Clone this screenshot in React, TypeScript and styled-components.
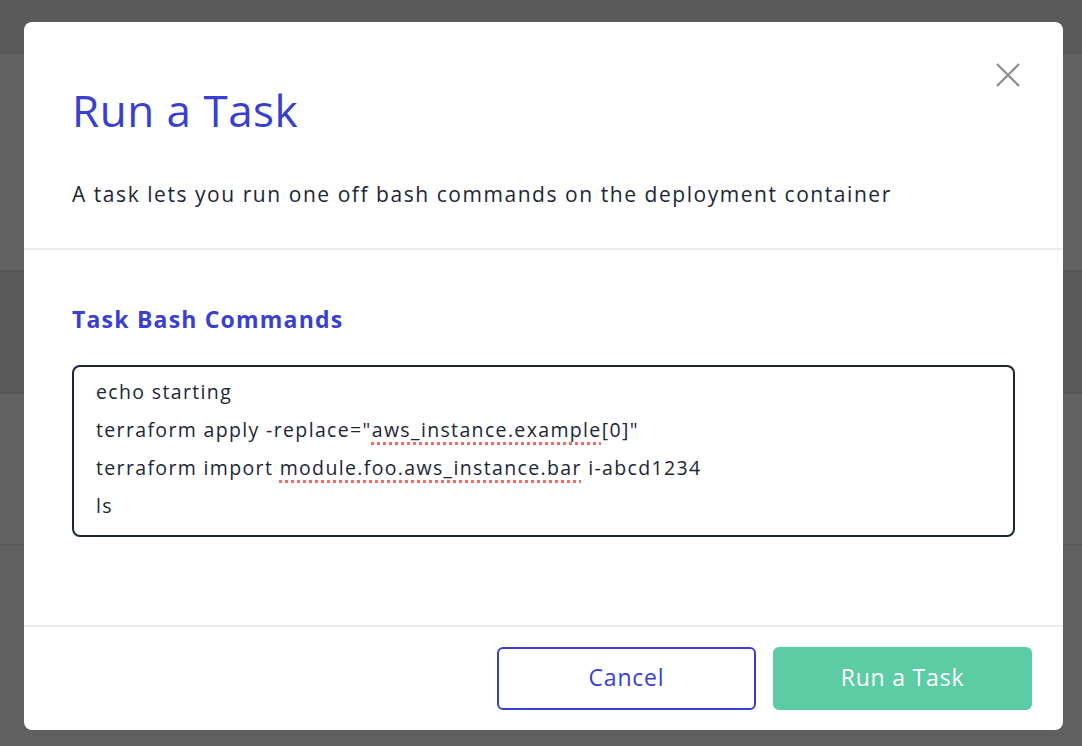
import styled, { createGlobalStyle } from 'styled-components';

const Global = createGlobalStyle`
  html, body { margin: 0; height: 100%; }
  body { font-family: 'Open Sans', 'Liberation Sans', sans-serif; background: #5e5e5e; overflow: hidden; }
`;

const Page = styled.div`
  position: relative;
  width: 1082px;
  height: 746px;
  background: #606060;
`;

const PageBand = styled.div<{ $h: number; $bg: string }>`
  height: ${({ $h }) => $h}px;
  background: ${({ $bg }) => $bg};
  border-bottom: 2px solid #585858;
`;

const Overlay = styled.div`
  position: absolute;
  inset: 0;
  padding: 22px 19px 16px 24px;
`;

const Modal = styled.div`
  height: 708px;
  background: #fff;
  border-radius: 8px;
  display: flex;
  flex-direction: column;
  position: relative;
`;

const Close = styled.button`
  position: absolute;
  top: 40px;
  right: 42px;
  border: 0;
  background: none;
  padding: 0;
  cursor: pointer;
`;

const Header = styled.div`
  padding: 60px 48px 40px;
  border-bottom: 2px solid #ececec;
`;

const Title = styled.h1`
  margin: 0 0 42px;
  font-size: 44px;
  font-weight: 400;
  letter-spacing: 0.5px;
  color: #3a3fd3;
  line-height: 56px;
`;

const Description = styled.p`
  margin: 0;
  font-size: 21px;
  letter-spacing: 1.55px;
  color: #1c2636;
`;

const Body = styled.div`
  flex: 1;
  padding: 53px 48px 0;
  border-bottom: 2px solid #ececec;
`;

const Label = styled.h2`
  margin: 0 0 30px;
  font-size: 23px;
  font-weight: 700;
  letter-spacing: 1.2px;
  color: #3a3fd3;
`;

const Commands = styled.div`
  border: 2px solid #1c2636;
  border-radius: 8px;
  padding: 6px 22px;
  height: 156px;
  font-size: 19.5px;
  letter-spacing: 1.35px;
  line-height: 38px;
  color: #1c2636;
`;

const Typo = styled.span`
  text-decoration: underline dotted #f26a6a 3px;
  text-underline-offset: 5px;
`;

const Footer = styled.div`
  display: flex;
  justify-content: flex-end;
  gap: 17px;
  padding: 20px 31px 20px;
`;

const Button = styled.button<{ $primary?: boolean }>`
  width: 259px;
  height: 63px;
  border-radius: 6px;
  font-family: inherit;
  font-size: 23px;
  letter-spacing: 0.8px;
  line-height: 1;
  padding-bottom: 4px;
  cursor: pointer;
  border: 2px solid ${({ $primary }) => ($primary ? '#5ccca4' : '#3a3fd3')};
  background: ${({ $primary }) => ($primary ? '#5ccca4' : '#fff')};
  color: ${({ $primary }) => ($primary ? '#fff' : '#3a3fd3')};
`;

export default function App() {
  return (
    <Page>
      <Global />
      <PageBand $h={52} $bg="#5a5a5a" />
      <PageBand $h={216} $bg="#626262" />
      <PageBand $h={120} $bg="#5a5a5a" />
      <PageBand $h={150} $bg="#626262" />
      <Overlay>
        <Modal>
          <Close aria-label="Close">
            <svg width="26" height="26" viewBox="0 0 26 26" stroke="#8a8a8a" strokeWidth="2.2">
              <path d="M2 2l22 22M24 2L2 24" />
            </svg>
          </Close>
          <Header>
            <Title>Run a Task</Title>
            <Description>A task lets you run one off bash commands on the deployment container</Description>
          </Header>
          <Body>
            <Label>Task Bash Commands</Label>
            <Commands>
              <div>echo starting</div>
              <div>
                terraform apply -replace="<Typo>aws_instance.example</Typo>[0]"
              </div>
              <div>
                terraform import <Typo>module.foo.aws_instance.bar</Typo> i-abcd1234
              </div>
              <div>ls</div>
            </Commands>
          </Body>
          <Footer>
            <Button>Cancel</Button>
            <Button $primary>Run a Task</Button>
          </Footer>
        </Modal>
      </Overlay>
    </Page>
  );
}
